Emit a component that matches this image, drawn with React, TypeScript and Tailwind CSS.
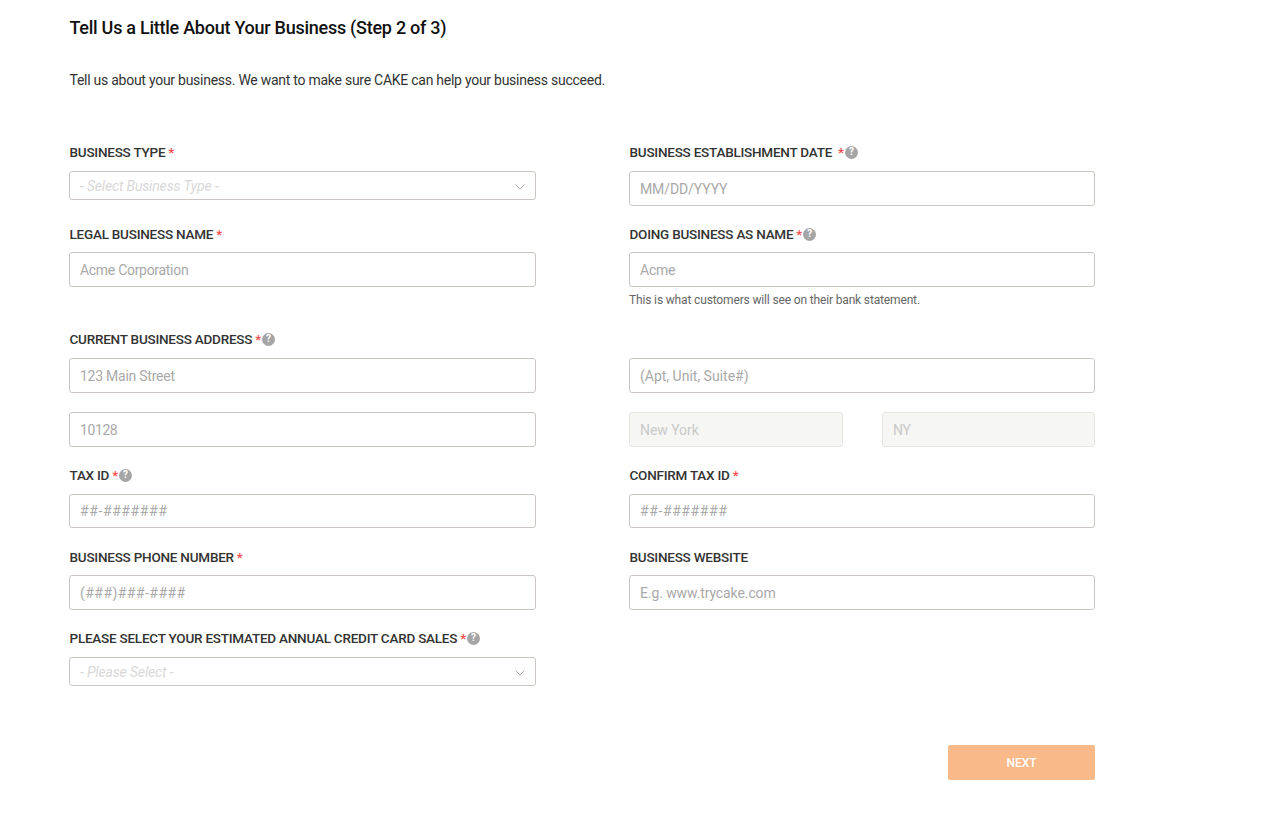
import React from 'react';

const Help: React.FC = () => (
  <span className="ml-px inline-flex h-[13px] w-[13px] items-center justify-center rounded-full bg-[#a5a5a5] text-[10px] font-bold leading-none text-white">
    ?
  </span>
);

const Label: React.FC<{ text: string; required?: boolean; help?: boolean; gap?: boolean }> = ({ text, required, help, gap }) => (
  <div className="flex h-[18px] items-center whitespace-pre pl-[0.5px] text-[13.5px] font-medium leading-[18px] tracking-[-0.23px] text-[#333333]">
    {text}
    {required && <span className={gap ? 'ml-[6px] text-[#f44c4c]' : 'ml-[3px] text-[#f44c4c]'}>*</span>}
    {help && <Help />}
  </div>
);

const Input: React.FC<{ placeholder: string; disabled?: boolean; track?: string; h?: string }> = ({ placeholder, disabled, track, h }) => (
  <input
    type="text"
    placeholder={placeholder}
    disabled={disabled}
    className={`block w-full rounded-[3px] border px-[10px] text-[14px] outline-none ${track ?? 'tracking-[-0.25px]'} ${h ?? 'h-[35px]'} ${
      disabled
        ? 'border-[#e8e6e3] bg-[#f6f6f4] placeholder:text-[#c9c9c9]'
        : 'border-[#cbc6c2] bg-white placeholder:text-[#a9a9a9]'
    }`}
  />
);

const Select: React.FC<{ placeholder: string }> = ({ placeholder }) => (
  <div className="flex h-[29px] w-full items-center justify-between rounded-[3px] border border-[#cbc6c2] bg-white pl-[10px] pr-[10px]">
    <span className="pt-[2px] text-[14px] italic tracking-[-0.15px] text-[#d8d8d8]">{placeholder}</span>
    <svg width="10" height="6" viewBox="0 0 10 6" fill="none" className="mt-[3px]">
      <path d="M0.5 0.5L5 5L9.5 0.5" stroke="#a8a8a8" strokeWidth="1" />
    </svg>
  </div>
);

const Row: React.FC<{ className?: string; children: React.ReactNode }> = ({ className, children }) => (
  <div className={`grid grid-cols-[467px_466px] gap-x-[93px] ${className ?? ''}`}>{children}</div>
);

export default function App() {
  return (
    <div className="min-h-[821px] bg-white pl-[69px] pt-[17px] text-[#333333] [font-family:Roboto,sans-serif]">
      <h1 className="pl-[0.5px] text-[18px] font-medium leading-[22px] tracking-[-0.26px] text-[#111111]">
        Tell Us a Little About Your Business (Step 2 of 3)
      </h1>
      <p className="mt-[31px] pl-[0.5px] text-[14px] leading-[20px] tracking-[-0.26px] text-[#333333]">
        Tell us about your business. We want to make sure CAKE can help your business succeed.
      </p>

      <Row className="mt-[53px]">
        <div>
          <Label text="BUSINESS TYPE" required />
          <div className="mt-[10px]">
            <Select placeholder="- Select Business Type -" />
          </div>
        </div>
        <div>
          <Label text="BUSINESS ESTABLISHMENT DATE" required help gap />
          <div className="mt-[10px]">
            <Input placeholder="MM/DD/YYYY" track="tracking-[-0.1px]" />
          </div>
        </div>
      </Row>

      <Row className="mt-[19px]">
        <div>
          <Label text="LEGAL BUSINESS NAME" required />
          <div className="mt-[9px]">
            <Input placeholder="Acme Corporation" track="tracking-[-0.3px]" />
          </div>
        </div>
        <div>
          <Label text="DOING BUSINESS AS NAME" required help />
          <div className="mt-[9px]">
            <Input placeholder="Acme" />
          </div>
          <p className="mt-[5px] text-[12px] leading-[16px] tracking-[-0.15px] text-[#666666]">
            This is what customers will see on their bank statement.
          </p>
        </div>
      </Row>

      <div className="mt-[22px]">
        <Label text="CURRENT BUSINESS ADDRESS" required help />
      </div>
      <Row className="mt-[10px]">
        <Input placeholder="123 Main Street" />
        <Input placeholder="(Apt, Unit, Suite#)" track="tracking-[0px]" />
      </Row>
      <Row className="mt-[19px]">
        <Input placeholder="10128" track="tracking-[-0.4px]" />
        <div className="grid grid-cols-[214px_213px] gap-x-[39px]">
          <Input placeholder="New York" disabled track="tracking-[-0.05px]" />
          <Input placeholder="NY" disabled />
        </div>
      </Row>

      <Row className="mt-[19px]">
        <div>
          <Label text="TAX ID" required help />
          <div className="mt-[10px]">
            <Input placeholder="##-#######" h="h-[34px]" track="tracking-[0.6px]" />
          </div>
        </div>
        <div>
          <Label text="CONFIRM TAX ID" required />
          <div className="mt-[10px]">
            <Input placeholder="##-#######" h="h-[34px]" track="tracking-[0.6px]" />
          </div>
        </div>
      </Row>

      <Row className="mt-[20px]">
        <div>
          <Label text="BUSINESS PHONE NUMBER" required />
          <div className="mt-[9px]">
            <Input placeholder="(###)###-####" track="tracking-[0.45px]" />
          </div>
        </div>
        <div>
          <Label text="BUSINESS WEBSITE" />
          <div className="mt-[9px]">
            <Input placeholder="E.g. www.trycake.com" track="tracking-[-0.1px]" />
          </div>
        </div>
      </Row>

      <Row className="mt-[19px]">
        <div>
          <Label text="PLEASE SELECT YOUR ESTIMATED ANNUAL CREDIT CARD SALES" required help />
          <div className="mt-[10px]">
            <Select placeholder="- Please Select -" />
          </div>
        </div>
      </Row>

      <div className="mt-[59px] flex w-[1026px] justify-end">
        <button
          type="button"
          className="h-[35px] w-[147px] rounded-[2px] bg-[#f9b988] text-[12px] font-medium text-white"
        >
          NEXT
        </button>
      </div>
    </div>
  );
}
